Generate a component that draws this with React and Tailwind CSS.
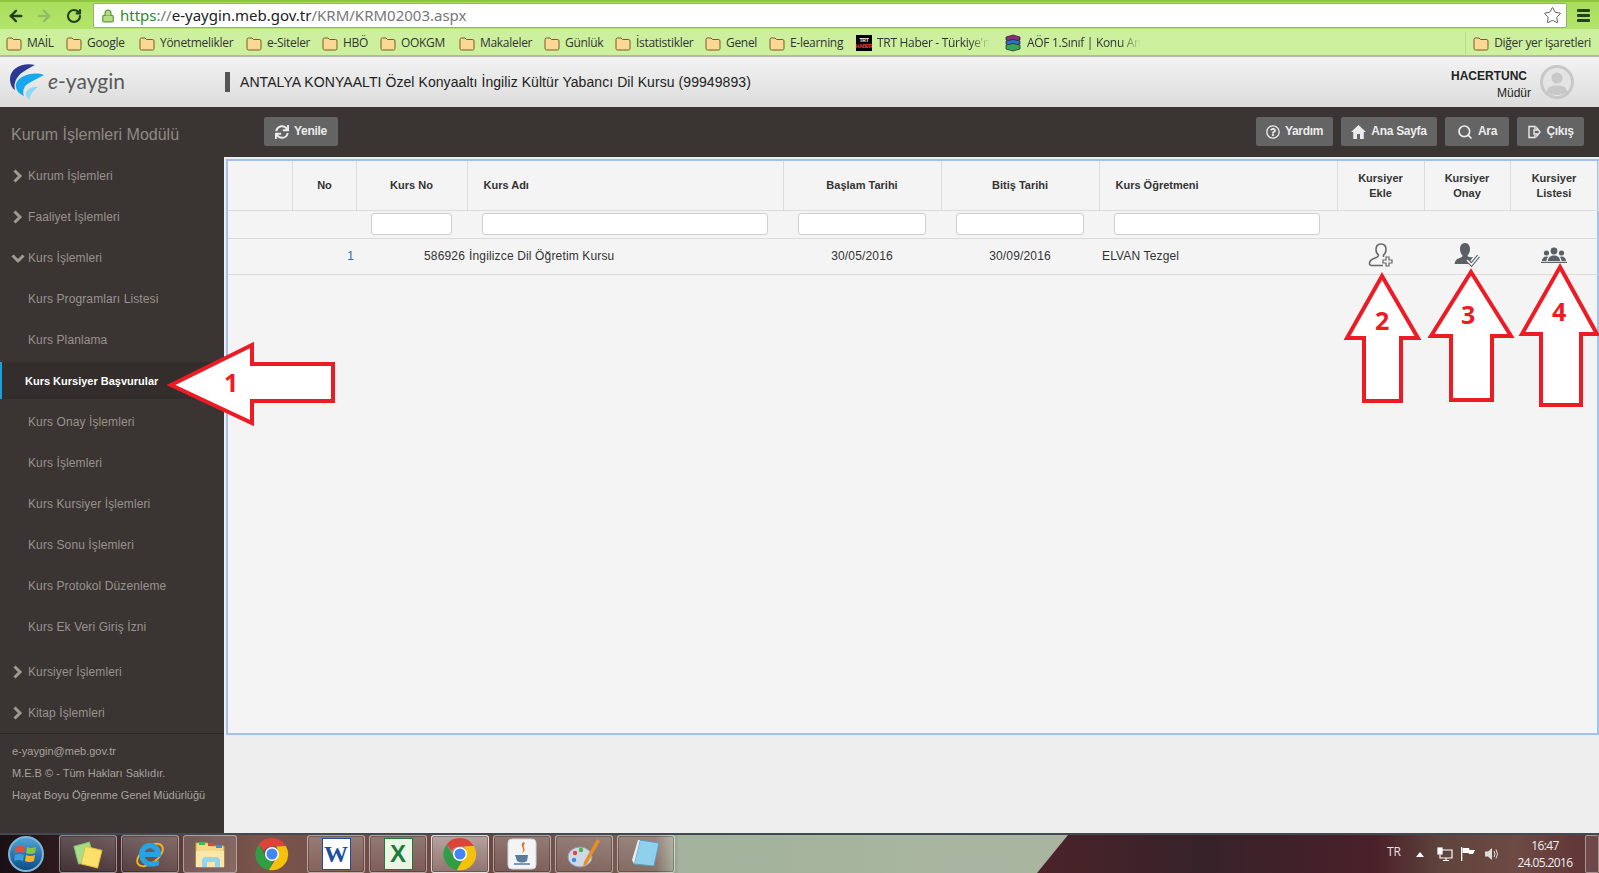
import { ArrowLeft, ArrowRight, RotateCw, Lock, Star, Search } from 'lucide-react'
import { FaSync, FaRegQuestionCircle } from 'react-icons/fa'

const bookmarks = [
  { label: 'MAİL', w: 'w-[60px]' },
  { label: 'Google', w: 'w-[73px]' },
  { label: 'Yönetmelikler', w: 'w-[107px]' },
  { label: 'e-Siteler', w: 'w-[76px]' },
  { label: 'HBÖ', w: 'w-[58px]' },
  { label: 'OOKGM', w: 'w-[79px]' },
  { label: 'Makaleler', w: 'w-[85px]' },
  { label: 'Günlük', w: 'w-[71px]' },
  { label: 'İstatistikler', w: 'w-[90px]' },
  { label: 'Genel', w: 'w-[64px]' },
  { label: 'E-learning', w: 'w-[87px]' },
]

const subItems = [
  'Kurs Programları Listesi',
  'Kurs Planlama',
  'Kurs Kursiyer Başvurular',
  'Kurs Onay İşlemleri',
  'Kurs İşlemleri',
  'Kurs Kursiyer İşlemleri',
  'Kurs Sonu İşlemleri',
  'Kurs Protokol Düzenleme',
  'Kurs Ek Veri Giriş İzni',
]

function Folder() {
  return (
    <svg width="16" height="15" viewBox="0 0 16 15" className="shrink-0">
      <path d="M1 3.5 Q1 2 2.5 2 H6 L7.5 3.5 H13.5 Q15 3.5 15 5 V12.5 Q15 14 13.5 14 H2.5 Q1 14 1 12.5 Z" fill="#fbd894" stroke="#7a5a28" />
    </svg>
  )
}

function ChromeLogo({ size = 34 }) {
  return (
    <svg width={size} height={size} viewBox="0 0 32 32">
      <path d="M16 1 A15 15 0 0 1 29 8.5 L16 9 Q10 9 8 13 L3.5 7 A15 15 0 0 1 16 1Z" fill="#db4437" />
      <path d="M3.5 7 L10 18.5 Q12 22 17 22.8 L13 31 A15 15 0 0 1 3.5 7Z" fill="#2f9e44" />
      <path d="M29 8.5 A15 15 0 0 1 13 31 L20.5 19 Q23 14 20 9 Z" fill="#f4c20d" />
      <circle cx="16" cy="16" r="6.6" fill="#fff" />
      <circle cx="16" cy="16" r="5.2" fill="#4285f4" />
    </svg>
  )
}

function BrowserBar() {
  return (
    <>
      <div className="flex h-[29px] items-center border-t-2 border-[#8ec63f] bg-gradient-to-b from-[#a8dd5c] to-[#b4e56c]">
        <div className="flex w-[93px] items-center pl-[7px] text-[#24401a]">
          <ArrowLeft size={18} strokeWidth={3.2} />
          <ArrowRight size={18} strokeWidth={3.2} className="ml-[10px] text-[#8fbf62]" />
          <RotateCw size={16} strokeWidth={3.2} className="ml-[13px]" />
        </div>
        <div className="flex h-[25px] w-[1474px] items-center rounded-[2px] border border-[#93b56a] bg-white pl-[7px]">
          <Lock size={14} strokeWidth={2} fill="#b5dc86" className="text-[#5f9a32]" />
          <span className="ml-[5px] font-['Noto_Sans',sans-serif] text-[15px] leading-none text-[#777]">
            <span className="text-[#2e8b2e]">https</span>://<span className="text-[#222]">e-yaygin.meb.gov.tr</span>/KRM/KRM02003.aspx
          </span>
          <Star size={19} strokeWidth={1.2} className="ml-auto mr-[4px] text-[#555]" />
        </div>
        <div className="ml-[10px] flex w-[13px] flex-col gap-[2px]">
          <div className="h-[3px] rounded-[1px] bg-[#24401a]" />
          <div className="h-[3px] rounded-[1px] bg-[#24401a]" />
          <div className="h-[3px] rounded-[1px] bg-[#24401a]" />
        </div>
      </div>
      <div className="flex h-[28px] items-center border-b-2 border-[#b4b8ac] bg-[#cdf09e] pl-[6px] pt-[2px] font-['Open_Sans',sans-serif] text-[12px] tracking-[-0.3px] text-[#333]">
        {bookmarks.map((b) => (
          <div key={b.label} className={`flex items-center gap-[5px] ${b.w}`}>
            <Folder />
            <span>{b.label}</span>
          </div>
        ))}
        <div className="flex w-[148px] items-center gap-[5px]">
          <div className="flex h-[16px] w-[16px] flex-col items-center justify-center bg-black font-['Liberation_Sans',sans-serif] text-[5px] font-bold leading-[6px] text-white">
            <span>TRT</span>
            <span className="text-[#ef4444]">HABER</span>
          </div>
          <span className="whitespace-nowrap [mask-image:linear-gradient(to_right,black_82%,transparent)]">TRT Haber - Türkiye'n</span>
        </div>
        <div className="flex items-center gap-[5px]">
          <svg width="18" height="18" viewBox="0 0 18 18">
            <path d="M2 3 L9 1 L16 3 V6 L9 8 L2 6Z" fill="#8e2a7c" stroke="#222" strokeWidth=".7" />
            <path d="M2 7 L9 5.5 L16 7 V10 L9 12 L2 10Z" fill="#2f6fd0" stroke="#222" strokeWidth=".7" />
            <path d="M2 11 L9 9.5 L16 11 V15 L9 17 L2 15Z" fill="#3aa655" stroke="#222" strokeWidth=".7" />
          </svg>
          <span className="whitespace-nowrap [mask-image:linear-gradient(to_right,black_82%,transparent)]">AÖF 1.Sınıf | Konu An</span>
        </div>
        <div className="ml-auto flex h-[22px] items-center gap-[5px] border-l border-[#b9dc8e] pl-[7px] pr-[8px]">
          <Folder />
          <span>Diğer yer işaretleri</span>
        </div>
      </div>
    </>
  )
}

function Logo() {
  return (
    <div className="flex w-[225px] items-center pl-[9px]">
      <svg width="36" height="38" viewBox="0 0 36 38" className="shrink-0">
        <path d="M26 2 C14 -1 1 5 1 16 C1 21 3 25 6 27 C4 20 8 13 14 9 C18 6 22 4 26 2Z" fill="#2a3a94" />
        <path d="M35 12 C24 8 9 13 7 21 C6 26 10 31 15 33 C13 28 15 23 20 20 C25 17 30 15 35 12Z" fill="#16a8ec" />
        <path d="M29 24 C23 23 16 27 17 32 C18 35 20 36 21 37 C20 33 24 28 29 24Z" fill="#8fd8f5" />
      </svg>
      <span className="mb-[4px] ml-[3px] font-['Lato',sans-serif] text-[21px] leading-none text-[#5a5a5a]">
        <span className="italic">e</span>-yaygin
      </span>
    </div>
  )
}

function Header() {
  return (
    <div className="flex h-[50px] items-center bg-gradient-to-b from-[#f3f3f3] to-[#dcdcdc] font-['Liberation_Sans',sans-serif]">
      <Logo />
      <div className="h-[20px] w-[5px] bg-[#555]" />
      <span className="ml-[10px] text-[14px] tracking-[0.07px] text-[#222]">ANTALYA KONYAALTI Özel Konyaaltı İngiliz Kültür Yabancı Dil Kursu (99949893)</span>
      <div className="ml-auto mr-[9px] flex flex-col items-end pt-[5px] text-[12px] leading-[17px] text-[#222]">
        <span className="mr-[4px] font-bold">HACERTUNC</span>
        <span>Müdür</span>
      </div>
      <svg width="34" height="34" viewBox="0 0 34 34" className="mr-[25px]">
        <circle cx="17" cy="17" r="15.5" fill="#e4e4e4" stroke="#c8c8c8" strokeWidth="3" />
        <circle cx="17" cy="13" r="5.6" fill="#c8c8c8" />
        <path d="M6.5 27 C8 21 12 20.5 17 20.5 C22 20.5 26 21 27.5 27 C22 31 12 31 6.5 27Z" fill="#c8c8c8" />
      </svg>
    </div>
  )
}

function Chevron({ open }) {
  return (
    <svg width="14" height="14" viewBox="0 0 14 14" fill="none" stroke="#a09a95" strokeWidth="3">
      <path d={open ? 'M1.5 4.5 L7 10 L12.5 4.5' : 'M3.5 1.5 L9 7 L3.5 12.5'} />
    </svg>
  )
}

function Sidebar() {
  const Top = ({ label, open }) => (
    <div className="flex h-[41px] items-center pl-[11px]">
      <div className="w-[17px]">
        <Chevron open={open} />
      </div>
      <span className="text-[#98928d]">{label}</span>
    </div>
  )
  return (
    <div className="flex w-[224px] shrink-0 flex-col bg-[#3a3532] font-['Liberation_Sans',sans-serif] text-[12px] tracking-[0.1px]">
      <div className="flex h-[48px] items-center pl-[11px] pt-[8px] text-[16px] tracking-normal text-[#8f8985]">Kurum İşlemleri Modülü</div>
      <Top label="Kurum İşlemleri" />
      <Top label="Faaliyet İşlemleri" />
      <Top label="Kurs İşlemleri" open />
      {subItems.map((s) =>
        s === 'Kurs Kursiyer Başvurular' ? (
          <div key={s} className="my-[2px] flex h-[37px] items-center border-l-2 border-[#1b9fdf] bg-[#332e2b] pl-[23px] pt-px text-[11px] font-bold tracking-normal text-white">
            {s}
          </div>
        ) : (
          <div key={s} className="flex h-[41px] items-center pl-[28px] text-[#98928d]">
            {s}
          </div>
        ),
      )}
      <div className="h-[4px]" />
      <Top label="Kursiyer İşlemleri" />
      <Top label="Kitap İşlemleri" />
      <div className="flex flex-1 flex-col border-t border-[#2b2725] pl-[12px] pt-[6px] text-[11px] leading-[22px] tracking-normal text-[#a8a29d]">
        <span>e-yaygin@meb.gov.tr</span>
        <span>M.E.B © - Tüm Hakları Saklıdır.</span>
        <span>Hayat Boyu Öğrenme Genel Müdürlüğü</span>
      </div>
    </div>
  )
}

function ToolButton({ icon, label, w }) {
  return (
    <div className={`flex h-[29px] items-center justify-center gap-[5px] rounded-[2px] bg-[#646464] text-[12px] font-bold tracking-[-0.3px] text-[#ececec] ${w}`}>
      {icon}
      <span className="pb-[2px]">{label}</span>
    </div>
  )
}

function Toolbar() {
  return (
    <div className="flex h-[50px] items-center bg-[#3a3532] pb-px pl-[40px] pr-[15px]">
      <ToolButton w="w-[74px]" label="Yenile" icon={<FaSync size={14} />} />
      <div className="ml-auto flex gap-[8px]">
        <ToolButton w="w-[77px]" label="Yardım" icon={<FaRegQuestionCircle size={14} />} />
        <ToolButton
          w="w-[96px]"
          label="Ana Sayfa"
          icon={
            <svg width="15" height="14" viewBox="0 0 15 14" fill="currentColor">
              <path d="M7.5 0 L15 7 H12.8 V14 H9 V9 H6 V14 H2.2 V7 H0Z" />
            </svg>
          }
        />
        <ToolButton w="w-[64px]" label="Ara" icon={<Search size={16} strokeWidth={2.5} />} />
        <ToolButton
          w="w-[67px]"
          label="Çıkış"
          icon={
            <svg width="14" height="14" viewBox="0 0 14 14" fill="none" stroke="currentColor" strokeWidth="1.4">
              <path d="M8 4 V1.5 H2 V12.5 H8 V10" />
              <path d="M7 5 H10 V3 L13 7 L10 11 V9 H7 Z" />
            </svg>
          }
        />
      </div>
    </div>
  )
}

function UserPlusIcon() {
  return (
    <svg width="26" height="26" viewBox="0 0 26 26" fill="none" stroke="#666" strokeWidth="1.5">
      <path d="M13 2 C9.5 2 8 4.5 8 7.5 C8 10 9 12 10.5 13 C10.5 15 9 15.5 6 16.5 C3 17.5 1.5 19 1.5 21.5 C1.5 23 2.2 23.5 3.5 23.5 H15" />
      <path d="M13 2 C16.5 2 18 4.5 18 7.5 C18 10 17 12 15.5 13 V15" />
      <path d="M18 15 H21 V18 H24 V21 H21 V24 H18 V21 H15 V18 H18 Z" strokeWidth="1.2" fill="#f4f4f4" />
    </svg>
  )
}

function UserCheckIcon() {
  return (
    <svg width="26" height="26" viewBox="0 0 26 26">
      <path d="M11 1 C7.5 1 6 4 6 7 C6 10 7 12 8.5 13.5 C8.5 15 7 15.5 4.5 16.5 C2 17.5 1 19 .5 22 H14 L19 15 C16 15.5 13.5 15 13.5 13.5 C15 12 16 10 16 7 C16 4 14.5 1 11 1Z" fill="#5b6066" />
      <path d="M13 18 L17.5 22.5 L24.5 14" fill="none" stroke="#5b6066" strokeWidth="3.6" />
      <path d="M13 18 L17.5 22.5 L24.5 14" fill="none" stroke="#f4f4f4" strokeWidth="1.6" />
    </svg>
  )
}

function GroupIcon() {
  return (
    <svg width="26" height="16" viewBox="0 0 26 16" fill="#5b6066">
      <circle cx="13" cy="4" r="3.4" />
      <circle cx="5.5" cy="6" r="2.6" />
      <circle cx="20.5" cy="6" r="2.6" />
      <path d="M7 14 C7 10 10 8.5 13 8.5 C16 8.5 19 10 19 14 Z" />
      <path d="M1 14 C1 11 3 9.5 5.5 9.5 C6.3 9.5 7 9.7 7.3 10 C6 11 5.6 12.5 5.5 14 Z" />
      <path d="M25 14 C25 11 23 9.5 20.5 9.5 C19.7 9.5 19 9.7 18.7 10 C20 11 20.4 12.5 20.5 14 Z" />
      <rect x="0" y="14.8" width="26" height="1.2" />
    </svg>
  )
}

function Th({ children, className = '' }) {
  return <th className={`border-r border-b border-[#dcdcdc] text-[11px] font-bold leading-[15px] tracking-normal text-[#333] ${className}`}>{children}</th>
}

function FilterCell({ input }) {
  return (
    <td className="border-b border-[#dcdcdc] p-0 align-middle">
      {input && <div className={`h-[22px] rounded-[3px] border border-[#cfcfcf] bg-white ${input}`} />}
    </td>
  )
}

function CourseTable() {
  return (
    <table className="w-[1370px] table-fixed border-collapse text-[12px] tracking-[0.15px] text-[#333]">
      <colgroup>
        <col className="w-[64px]" />
        <col className="w-[64px]" />
        <col className="w-[111px]" />
        <col className="w-[316px]" />
        <col className="w-[158px]" />
        <col className="w-[158px]" />
        <col className="w-[238px]" />
        <col className="w-[87px]" />
        <col className="w-[86px]" />
        <col className="w-[88px]" />
      </colgroup>
      <thead>
        <tr className="h-[49px]">
          <Th />
          <Th className="pl-px">No</Th>
          <Th>Kurs No</Th>
          <Th className="pl-[16px] text-left">Kurs Adı</Th>
          <Th>Başlam Tarihi</Th>
          <Th>Bitiş Tarihi</Th>
          <Th className="pl-[16px] text-left">Kurs Öğretmeni</Th>
          <Th className="pt-[2px]">Kursiyer<br />Ekle</Th>
          <Th className="pt-[2px]">Kursiyer<br />Onay</Th>
          <Th className="pt-[2px]">Kursiyer<br />Listesi</Th>
        </tr>
        <tr className="h-[28px]">
          <FilterCell />
          <FilterCell />
          <FilterCell input="ml-[15px] w-[81px]" />
          <FilterCell input="ml-[15px] w-[286px]" />
          <FilterCell input="ml-[15px] w-[128px]" />
          <FilterCell input="ml-[15px] w-[128px]" />
          <FilterCell input="ml-[15px] w-[206px]" />
          <FilterCell />
          <FilterCell />
          <FilterCell />
        </tr>
      </thead>
      <tbody>
        <tr className="h-[36px] border-b border-[#dcdcdc]">
          <td />
          <td className="pr-[2px] text-right text-[#2f6ea5]">1</td>
          <td className="pr-[2px] text-right">586926</td>
          <td className="pl-[2px]">İngilizce Dil Öğretim Kursu</td>
          <td className="text-center">30/05/2016</td>
          <td className="text-center">30/09/2016</td>
          <td className="pl-[3px]">ELVAN Tezgel</td>
          <td><div className="-mt-[3px] flex justify-center"><UserPlusIcon /></div></td>
          <td><div className="-mt-[3px] flex justify-center"><UserCheckIcon /></div></td>
          <td><div className="-mt-[3px] flex justify-center"><GroupIcon /></div></td>
        </tr>
      </tbody>
    </table>
  )
}

function TaskButton({ children, active }) {
  return (
    <div className={`flex h-[38px] w-[58px] items-center justify-center rounded-[3px] border shadow-[inset_0_0_0_1px_rgba(0,0,0,0.25)] ${active ? 'border-white/70 bg-gradient-to-b from-white/50 to-white/25' : 'border-white/40 bg-gradient-to-b from-white/25 to-white/10'}`}>
      {children}
    </div>
  )
}

function Taskbar() {
  return (
    <div className="relative flex h-[40px] items-center overflow-hidden border-t-2 border-[#3f4a52] font-['Open_Sans',sans-serif] text-white">
      <svg className="absolute inset-0 h-full w-full" viewBox="0 0 1599 40" preserveAspectRatio="none">
        <defs>
          <linearGradient id="wall" x1="0" x2="1" y1="0" y2="0">
            <stop offset="0" stopColor="#1a0f14" />
            <stop offset="0.06" stopColor="#3a2226" />
            <stop offset="0.16" stopColor="#7a554c" />
            <stop offset="0.3" stopColor="#6b4640" />
            <stop offset="0.41" stopColor="#7a6055" />
            <stop offset="0.425" stopColor="#a3b39c" />
            <stop offset="0.66" stopColor="#aab5a0" />
            <stop offset="1" stopColor="#aab5a0" />
          </linearGradient>
          <linearGradient id="dark" x1="0" x2="1" y1="0" y2="0">
            <stop offset="0" stopColor="#4b2329" />
            <stop offset="0.3" stopColor="#37222a" />
            <stop offset="0.6" stopColor="#4a2029" />
            <stop offset="0.72" stopColor="#5f443c" />
            <stop offset="0.85" stopColor="#6d4a44" />
            <stop offset="1" stopColor="#5e3234" />
          </linearGradient>
        </defs>
        <rect width="1599" height="40" fill="url(#wall)" />
        <polygon points="1068,0 1599,0 1599,40 1037,40" fill="url(#dark)" />
      </svg>
      <div className="relative flex flex-1 items-center">
        <div className="ml-[8px] flex h-[36px] w-[36px] items-center justify-center rounded-full border-2 border-[#7fb4d8] bg-gradient-to-b from-[#4fa3d8] to-[#0b4f84]">
          <svg width="24" height="22" viewBox="0 0 24 22">
            <path d="M2 4 Q6 2 11 4 L10 10 Q6 8 1 10Z" fill="#e8502f" />
            <path d="M13 4 Q17 6 22 4 L21 10 Q16 12 12 10Z" fill="#8cc43e" />
            <path d="M1 12 Q6 10 10 12 L9 18 Q5 16 0 18Z" fill="#3a9ee0" />
            <path d="M12 12 Q16 14 21 12 L20 18 Q15 20 11 18Z" fill="#f7b32b" />
          </svg>
        </div>
        <div className="ml-[15px] flex items-center gap-[4px]">
          <TaskButton>
            <svg width="32" height="30" viewBox="0 0 32 30">
              <rect x="4" y="5" width="16" height="18" fill="#a6df8a" stroke="#8ac06f" transform="rotate(-15 12 14)" />
              <rect x="11" y="9" width="17" height="18" fill="#fbe06c" stroke="#e0c040" transform="rotate(14 19 18)" />
            </svg>
          </TaskButton>
          <TaskButton>
            <svg width="34" height="34" viewBox="0 0 34 34">
              <ellipse cx="17" cy="18" rx="15" ry="8" fill="none" stroke="#f2b01e" strokeWidth="2" transform="rotate(-38 17 18)" />
              <path d="M6 17 A11 11 0 0 1 28 17 V20 H12 C13 25 21 26 26 23 V28 C18 32 6 29 6 17Z M12 15 H22 C21 10 13 10 12 15Z" fill="#28a3e0" fillRule="evenodd" />
            </svg>
          </TaskButton>
          <div className="flex h-[38px] w-[54px] items-center justify-center rounded-[3px] border border-white/40 bg-white/15">
            <svg width="32" height="30" viewBox="0 0 32 30">
              <path d="M2 4 H14 L16 7 H30 V28 H2Z" fill="#f4d98a" stroke="#c7a552" />
              <rect x="5" y="3" width="6" height="3" fill="#3fb950" />
              <rect x="14" y="4" width="6" height="3" fill="#d9483b" />
              <rect x="22" y="6" width="6" height="3" fill="#3b8ede" />
              <path d="M2 12 H30 V28 H2Z" fill="#fbe7a8" />
              <path d="M8 28 V22 Q8 18 12 18 H22 Q26 18 26 22 V28 H21 V23 H13 V28Z" fill="#8fd6f0" />
            </svg>
          </div>
          <div className="flex h-[38px] w-[62px] items-center justify-center">
            <ChromeLogo />
          </div>
          <TaskButton>
            <div className="relative flex h-[32px] w-[29px] items-center justify-center border border-[#1d4f9e] bg-white font-['Liberation_Serif',serif] text-[24px] font-bold text-[#1d4f9e]">W</div>
          </TaskButton>
          <TaskButton>
            <div className="relative flex h-[32px] w-[29px] items-center justify-center border border-[#1d7a3c] bg-[#eaf5e6] font-['Liberation_Sans',sans-serif] text-[24px] font-bold text-[#1d7a3c]">X</div>
          </TaskButton>
          <TaskButton active>
            <ChromeLogo />
          </TaskButton>
          <TaskButton>
            <svg width="30" height="32" viewBox="0 0 30 32">
              <rect x="1" y="1" width="28" height="30" rx="4" fill="#f2f4f6" stroke="#cfd6dc" />
              <path d="M16 4 C12 9 19 10 15 15 C21 12 14 9 18 5Z" fill="#e76f1e" />
              <path d="M8 17 H21 L20 23 Q15 26 10 23Z" fill="#5a7a9a" />
              <path d="M7 26 H23" stroke="#5a7a9a" strokeWidth="1.5" />
            </svg>
          </TaskButton>
          <TaskButton>
            <svg width="34" height="32" viewBox="0 0 34 32">
              <ellipse cx="13" cy="19" rx="12" ry="10" fill="#cfd8e6" stroke="#8fa0b8" />
              <circle cx="8" cy="15" r="2.2" fill="#e0483b" />
              <circle cx="14" cy="12" r="2.2" fill="#45b549" />
              <circle cx="7" cy="22" r="2.2" fill="#3d8de0" />
              <path d="M30 1 L33 3 L20 26 L16 29 L17 24Z" fill="#e88e24" />
            </svg>
          </TaskButton>
          <TaskButton>
            <svg width="30" height="32" viewBox="0 0 30 32">
              <path d="M9 2 L28 5 L23 28 L3 26Z" fill="#8fd0ee" stroke="#5d9cba" />
              <path d="M9 2 L3 26 L1 22 L7 2Z" fill="#e9edf0" />
            </svg>
          </TaskButton>
        </div>
      </div>
      <div className="relative flex items-center">
        <span className="mb-[5px] text-[12px] text-[#e6e6e6]">TR</span>
        <div className="ml-[15px] h-0 w-0 border-x-[4px] border-b-[5px] border-x-transparent border-b-white" />
        <svg width="16" height="16" viewBox="0 0 16 16" fill="none" stroke="#fff" strokeWidth="1.2" className="ml-[13px]">
          <path d="M5 4 H15 V12 H3 V9" />
          <path d="M6 14.5 H12 M9 12 V14.5" />
          <rect x="1" y="2" width="4" height="6" fill="#fff" />
        </svg>
        <svg width="16" height="16" viewBox="0 0 16 16" className="ml-[7px]" fill="#fff">
          <rect x="1" y="1" width="1.3" height="14" />
          <path d="M2.5 2 H9 L9.5 4 H15 L13 8 H9 L8.5 7 H2.5Z" />
        </svg>
        <svg width="16" height="16" viewBox="0 0 16 16" className="ml-[8px]" fill="#ddd">
          <path d="M1 5.5 H4 L8 2 V14 L4 10.5 H1Z" />
          <path d="M10 5 Q12 8 10 11 M12 3.5 Q15 8 12 12.5" fill="none" stroke="#ddd" />
        </svg>
        <div className="ml-[15px] flex w-[60px] flex-col items-center text-[12px] leading-[17px] tracking-[-0.6px] text-[#f0f0f0]">
          <span>16:47</span>
          <span>24.05.2016</span>
        </div>
        <div className="ml-[10px] h-[38px] w-[14px] rounded-[2px] border border-white/40 bg-white/10" />
      </div>
    </div>
  )
}

function Annotations() {
  const red = '#ed1c24'
  return (
    <>
      <svg className="pointer-events-none absolute inset-0 h-full w-full" viewBox="0 0 1599 873">
        <g fill="#fff" stroke={red} strokeWidth="4" strokeLinejoin="miter">
          <polygon points="171,385 252,345 252,364 333,364 333,401 252,401 252,423" />
          <polygon points="1382,276 1418,338 1401,338 1401,401 1364,401 1364,338 1347,338" />
          <polygon points="1471,272 1511,336 1492,336 1492,400 1451,400 1451,336 1431,336" />
          <polygon points="1560,267 1597,334 1581,334 1581,405 1541,405 1541,334 1522,334" />
        </g>
      </svg>
      <span className="absolute left-[224px] top-[364px] font-['Open_Sans',sans-serif] text-[25px] font-bold text-[#ed1c24]">1</span>
      <span className="absolute left-[1375px] top-[302px] font-['Open_Sans',sans-serif] text-[25px] font-bold text-[#ed1c24]">2</span>
      <span className="absolute left-[1461px] top-[296px] font-['Open_Sans',sans-serif] text-[25px] font-bold text-[#ed1c24]">3</span>
      <span className="absolute left-[1552px] top-[293px] font-['Open_Sans',sans-serif] text-[25px] font-bold text-[#ed1c24]">4</span>
    </>
  )
}

export default function App() {
  return (
    <div className="relative flex h-[873px] w-[1599px] flex-col overflow-hidden font-['Liberation_Sans',sans-serif]">
      <BrowserBar />
      <Header />
      <div className="flex min-h-0 flex-1">
        <Sidebar />
        <div className="flex min-w-0 flex-1 flex-col bg-[#eeeeee]">
          <Toolbar />
          <div className="ml-[2px] mt-[2px] h-[576px] border-2 border-[#a3c0ee] bg-[#f4f4f4]">
            <CourseTable />
          </div>
        </div>
      </div>
      <Taskbar />
      <Annotations />
    </div>
  )
}
